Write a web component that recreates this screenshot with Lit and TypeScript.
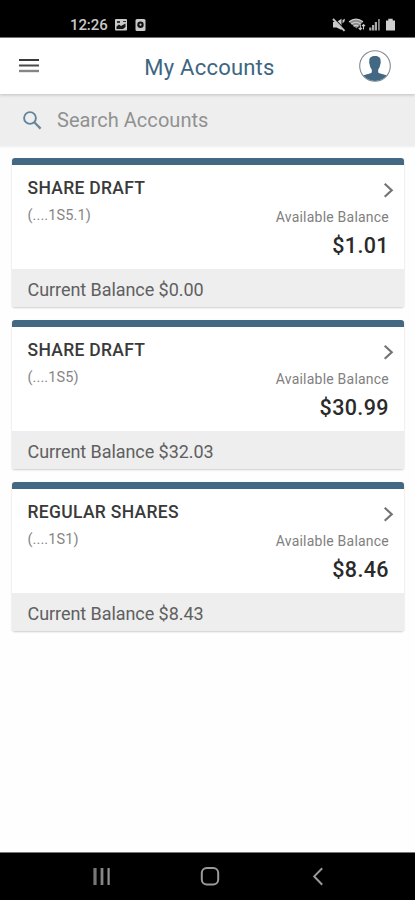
import { LitElement, html, css } from "lit";
import { customElement, property } from "lit/decorators.js";

interface Account {
  name: string;
  mask: string;
  available: string;
  current: string;
}

const ACCOUNTS: Account[] = [
  { name: "SHARE DRAFT", mask: "(....1S5.1)", available: "$1.01", current: "$0.00" },
  { name: "SHARE DRAFT", mask: "(....1S5)", available: "$30.99", current: "$32.03" },
  { name: "REGULAR SHARES", mask: "(....1S1)", available: "$8.46", current: "$8.43" },
];

@customElement("status-bar")
class StatusBar extends LitElement {
  static styles = css`
    :host {
      display: flex;
      flex: none;
      height: 38px;
      box-sizing: border-box;
      padding: 12px 19px 0 70px;
      background: #000;
      color: #c9c9c9;
      border-bottom: 1px solid #777;
    }
    .left, .right { display: flex; align-items: center; height: 25px; }
    .left { flex: 1; }
    .time { font-size: 15px; font-weight: 500; letter-spacing: -0.1px; width: 44px; white-space: nowrap; }
    svg { display: block; }
    .cam { margin-left: 7px; }
  `;
  render() {
    return html`
      <div class="left">
        <span class="time">12:26</span>
        <svg width="14" height="14" viewBox="0 0 14 14">
          <rect x="1" y="1" width="12" height="11.5" rx="1" fill="#c9c9c9" />
          <path d="M2.5 11 V8.5 L5 6.5 L7 8 L11.5 5.5 V9 L9 11Z" fill="#151515" />
          <path d="M3 3h3v2H3z M9 3h3v1H9z" fill="#333" />
        </svg>
        <svg class="cam" width="11" height="14" viewBox="0 0 11 14">
          <rect x="0.5" y="1" width="10" height="12" rx="1.5" fill="#c9c9c9" />
          <circle cx="5.5" cy="6.7" r="3.2" fill="#111" />
          <circle cx="5.5" cy="6.7" r="1.1" fill="#c9c9c9" />
        </svg>
      </div>
      <div class="right">
        <svg width="64" height="16" viewBox="0 0 64 16">
          <g fill="#c9c9c9">
            <path d="M1 5H4.5L9.5 1.8V13L4.5 10.5H1Z" />
            <path d="M10.5 3L13 1.8L12.4 4.5L10.5 6.5Z" />
          </g>
          <path d="M1.8 1.2L13.2 13" stroke="#000" stroke-width="1.2" />
          <path d="M1 2L12.5 13.8" stroke="#c9c9c9" stroke-width="1.9" />
          <path d="M17 5Q24 -0.5 31 5L24.5 11.5Z" fill="#8a8a8a" />
          <path d="M17 4.8Q24 -0.5 31 4.8M19.3 7Q24 3.5 28.6 7M21.5 9.3Q24 7.4 26.4 9.3" fill="none" stroke="#d0d0d0" stroke-width="1.2" />
          <path d="M28.3 7.5V12.5M26.6 10.8L28.3 12.6L30 10.8M31.5 12.5V7.5M29.9 9.2L31.5 7.5L33.1 9.2" fill="none" stroke="#c9c9c9" stroke-width="1.1" />
          <path d="M37.2 10.5h2.2V13.5h-2.2zM40 8h2.2v5.5h-2.2zM42.8 5h2.2v8.5h-2.2z" fill="#aaa" />
          <path d="M46 2h1.8v11.5H46z" fill="#888" />
          <path d="M54 3.5h2.3V1.8h4.4v1.7H63V13.5h-9z" fill="#d0d0d0" />
        </svg>
      </div>
    `;
  }
}

@customElement("title-bar")
class TitleBar extends LitElement {
  static styles = css`
    :host {
      display: flex;
      flex: none;
      align-items: center;
      height: 56px;
      box-sizing: border-box;
      padding: 0 23px 0 19px;
      background: #fff;
      box-shadow: 0 1px 3px rgba(0, 0, 0, 0.2);
      z-index: 1;
    }
    svg { display: block; flex: none; }
    .title {
      flex: 1;
      text-align: center;
      margin: 3px 0 0 22px;
      font-size: 22px;
      line-height: 26px;
      letter-spacing: 0.22px;
      color: #3d6681;
    }
  `;
  render() {
    return html`
      <svg width="20" height="16" viewBox="0 0 20 16">
        <path d="M0 2H20" stroke="#3a3a3a" stroke-width="2" />
        <path d="M0 7.5H20" stroke="#4a4a4a" stroke-width="2" />
        <path d="M0 13H20" stroke="#858585" stroke-width="2.4" />
      </svg>
      <div class="title">My Accounts</div>
      <svg width="34" height="34" viewBox="0 0 34 34">
        <circle cx="17" cy="17" r="15.3" fill="#fff" stroke="#7d8a91" stroke-width="1.1" />
        <path d="M17 7C20.8 7 22.8 8.6 22.6 12.2L22.8 13.5L22 16.6C21.6 18.7 20.8 19.8 20.2 20.5V23.2C20.6 24.8 26.5 25 28.6 26.6A15.2 15.2 0 0 1 5.4 26.6C7.5 25 13.4 24.8 13.8 23.2V20.5C13 19.6 12.2 18.4 11.9 16.6L11.1 13.5L11.3 12.2C11.1 8.6 13.2 7 17 7Z" fill="#436884" />
      </svg>
    `;
  }
}

@customElement("search-field")
class SearchField extends LitElement {
  static styles = css`
    :host {
      display: flex;
      flex: none;
      align-items: center;
      height: 52px;
      box-sizing: border-box;
      padding-left: 22px;
      background: #eee;
      box-shadow: 0 1px 2px #eee;
    }
    .hint {
      margin-left: 14px;
      font-size: 20px;
      line-height: 24px;
      letter-spacing: 0.05px;
      color: #919191;
    }
  `;
  render() {
    return html`
      <svg width="21" height="21" viewBox="0 0 21 21" fill="none">
        <circle cx="8" cy="8" r="5.9" stroke="#61869b" stroke-width="1.9" />
        <path d="M12.3 12.3L18.6 18.6" stroke="#6d8798" stroke-width="2.3" />
      </svg>
      <span class="hint">Search Accounts</span>
    `;
  }
}

@customElement("account-card")
class AccountCard extends LitElement {
  @property({ attribute: false }) account!: Account;

  static styles = css`
    :host {
      display: flex;
      flex-direction: column;
      height: 149px;
      box-sizing: border-box;
      border-top: 7px solid #436884;
      border-radius: 3px;
      background: #fff;
      box-shadow: 0 1px 2px rgba(0, 0, 0, 0.2);
      overflow: hidden;
    }
    .body { flex: 1; display: flex; justify-content: space-between; padding: 0 15px 0 15.5px; }
    .left, .right { display: flex; flex-direction: column; white-space: nowrap; }
    .right { align-items: flex-end; }
    .name {
      margin-top: 13px;
      font-size: 17.5px;
      line-height: 20px;
      font-weight: 500;
      letter-spacing: 0.3px;
      color: #3a3a3a;
    }
    .mask { margin-top: 9px; font-size: 14.5px; line-height: 18px; letter-spacing: 0.1px; color: #858585; }
    .chevron { display: block; margin: 17px -5px 0 0; }
    .label { margin-top: 11px; font-size: 14px; line-height: 17px; letter-spacing: 0.22px; color: #808080; }
    .amount { margin-top: 7px; font-size: 21.5px; line-height: 25px; font-weight: 500; letter-spacing: 0.4px; color: #2a2a2a; }
    .foot {
      height: 38px;
      padding: 0 15.5px;
      background: #eee;
      font-size: 18px;
      line-height: 41px;
      letter-spacing: -0.06px;
      color: #606060;
    }
  `;
  render() {
    const a = this.account;
    return html`
      <div class="body">
        <div class="left">
          <div class="name">${a.name}</div>
          <div class="mask">${a.mask}</div>
        </div>
        <div class="right">
          <svg class="chevron" width="11" height="16" viewBox="0 0 11 16">
            <path d="M1.7 1.8L8.7 8.3L1.7 14.8" fill="none" stroke="#747474" stroke-width="2.2" />
          </svg>
          <div class="label">Available Balance</div>
          <div class="amount">${a.available}</div>
        </div>
      </div>
      <div class="foot">Current Balance ${a.current}</div>
    `;
  }
}

@customElement("nav-bar")
class NavBar extends LitElement {
  static styles = css`
    :host {
      display: grid;
      flex: none;
      grid-template-columns: 108px 108px 108px;
      justify-content: center;
      justify-items: center;
      align-items: center;
      height: 48px;
      box-sizing: border-box;
      padding-right: 0;
      padding-left: 4px;
      background: #000;
      border-top: 1px solid #777;
    }
  `;
  render() {
    return html`
      <svg width="20" height="20" viewBox="0 0 20 20">
        <path d="M3 1V18" stroke="#777" stroke-width="3.2" />
        <path d="M10 1V18" stroke="#858585" stroke-width="2.8" />
        <path d="M16.6 1V18" stroke="#929292" stroke-width="2.2" />
      </svg>
      <svg width="20" height="20" viewBox="0 0 20 20">
        <rect x="1.8" y="1.1" width="16.4" height="16.4" rx="5" fill="none" stroke="#9a9a9a" stroke-width="2" />
      </svg>
      <svg width="14" height="20" viewBox="0 0 14 20">
        <path d="M11.2 1.2L3.2 9.4L11.2 17.7" fill="none" stroke="#999" stroke-width="2" />
      </svg>
    `;
  }
}

@customElement("app-root")
class AppRoot extends LitElement {
  static styles = css`
    :host {
      display: flex;
      flex-direction: column;
      height: 900px;
      overflow: hidden;
      background: #fefefe;
      font-family: Roboto, "Liberation Sans", sans-serif;
    }
    .list {
      flex: 1;
      display: flex;
      flex-direction: column;
      gap: 13px;
      padding: 12px 11px 0 12px;
    }
  `;
  render() {
    return html`
      <status-bar></status-bar>
      <title-bar></title-bar>
      <search-field></search-field>
      <div class="list">
        ${ACCOUNTS.map((a) => html`<account-card .account=${a}></account-card>`)}
      </div>
      <nav-bar></nav-bar>
    `;
  }
}
